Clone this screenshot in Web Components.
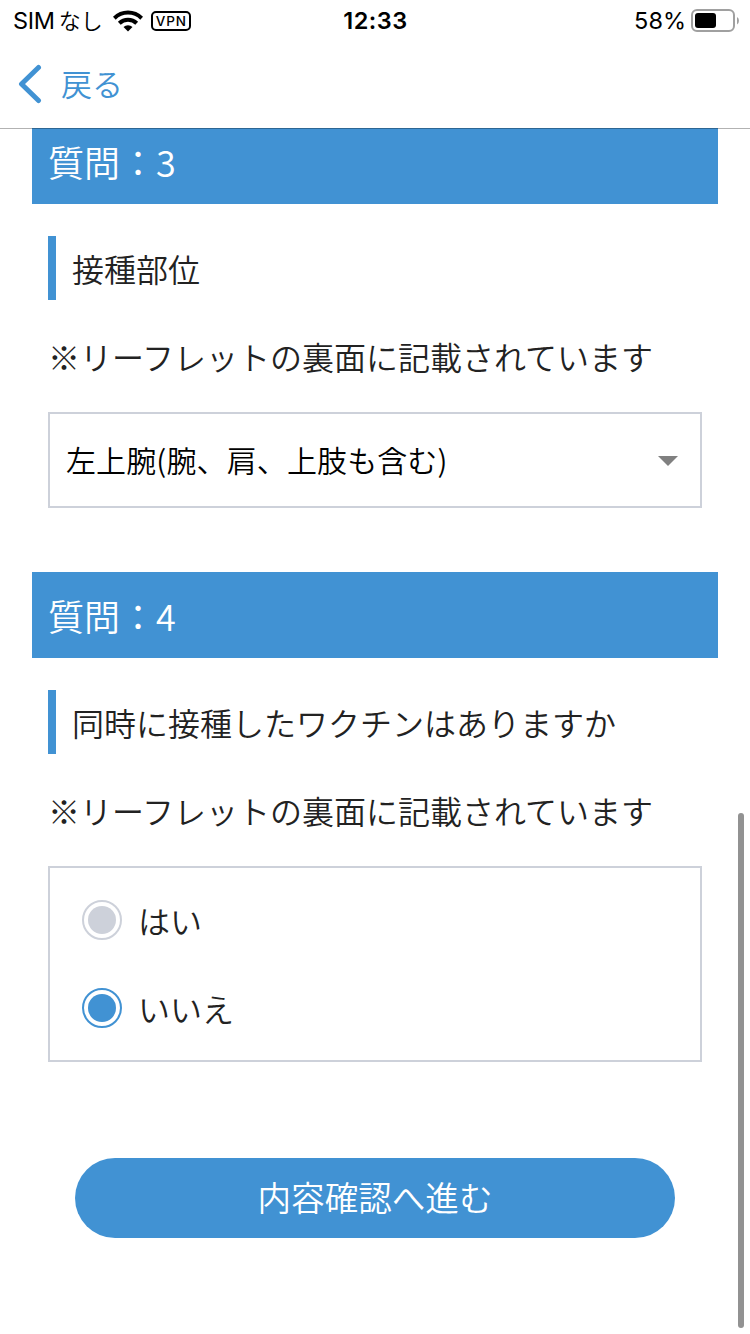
<!DOCTYPE html>
<html lang="ja">
<head>
<meta charset="UTF-8">
<meta name="viewport" content="width=device-width, initial-scale=1">
<title>質問</title>
<style>
    html, body {
        margin: 0;
        height: 100%;
        overflow: hidden;
        background-color: #fff;
    }
    body {
        --blue: #4192d3;
        --gray: #cdd1da;
        font-family: "Noto Sans CJK JP", sans-serif;
        font-weight: 350;
        color: #222;
    }
</style>
</head>
<body>
<app-screen>
    <status-bar slot="top" carrier="SIM" time="12:33" battery="58"></status-bar>
    <nav-bar slot="top">戻る</nav-bar>

    <question-section number="3">
        <span slot="title">接種部位</span>
        <span slot="note">※リーフレットの裏面に記載されています</span>
        <select-box>左上腕(腕、肩、上肢も含む)</select-box>
    </question-section>

    <question-section number="4">
        <span slot="title">同時に接種したワクチンはありますか</span>
        <span slot="note">※リーフレットの裏面に記載されています</span>
        <radio-group>
            <radio-option>はい</radio-option>
            <radio-option checked>いいえ</radio-option>
        </radio-group>
    </question-section>

    <submit-button>内容確認へ進む</submit-button>
</app-screen>

<script>
function attach(element, html) {
    const template = document.createElement('template');
    template.innerHTML = html;
    element.attachShadow({ mode: 'open' });
    element.shadowRoot.appendChild(template.content.cloneNode(true));
}

class AppScreen extends HTMLElement {
    constructor() {
        super();
        attach(this, `
            <style>
                :host {
                    display: flex;
                    flex-direction: column;
                    position: relative;
                    height: 1334px;
                    overflow: hidden;
                }
                .top {
                    position: relative;
                    z-index: 1;
                    background-color: #fff;
                    box-shadow: 0 1px 0 rgba(0, 0, 0, 0.3);
                }
                /* the list is scrolled a little under the top bar */
                .content {
                    display: flex;
                    flex-direction: column;
                    gap: 64px;
                    margin-top: -10px;
                    padding: 0 32px;
                }
                .scrollbar {
                    position: absolute;
                    right: 6px;
                    top: 813px;
                    bottom: 6px;
                    width: 6px;
                    border-radius: 3px;
                    background-color: #929292;
                }
            </style>
            <div class="top"><slot name="top"></slot></div>
            <div class="content"><slot></slot></div>
            <div class="scrollbar"></div>
        `);
    }
}

class StatusBar extends HTMLElement {
    constructor() {
        super();
        attach(this, `
            <style>
                :host {
                    display: grid;
                    grid-template-columns: 1fr auto 1fr;
                    align-items: center;
                    height: 40px;
                    padding: 0 11px 0 13px;
                    font-family: Inter, "Noto Sans CJK JP", sans-serif;
                    font-size: 23.5px;
                    font-weight: 400;
                    line-height: 41px;
                    color: #000;
                }
                .left, .right {
                    display: flex;
                    align-items: center;
                    height: 40px;
                }
                .right {
                    justify-content: flex-end;
                }
                .carrier {
                    letter-spacing: -0.3px;
                }
                .kana {
                    margin-left: 4px;
                    font-family: "Noto Sans CJK JP", sans-serif;
                    font-size: 22px;
                    font-weight: 350;
                    line-height: 36px;
                    padding-bottom: 4px;
                }
                .wifi {
                    margin-left: 10px;
                }
                .vpn {
                    box-sizing: border-box;
                    width: 40px;
                    height: 20px;
                    margin-left: 8px;
                    border: 2px solid #000;
                    border-radius: 5px;
                    font-size: 13.5px;
                    font-weight: 500;
                    line-height: 16px;
                    letter-spacing: 0.8px;
                    text-align: center;
                    text-indent: 1px;
                }
                .time {
                    font-weight: 600;
                    letter-spacing: 0.5px;
                    padding-right: 1px;
                }
                .battery {
                    margin-left: 5px;
                }
                svg {
                    display: block;
                }
            </style>
            <div class="left">
                <span class="carrier"></span><span class="kana">なし</span>
                <svg class="wifi" width="30" height="22" viewBox="0 0 30 22">
                    <g fill="none" stroke="#000" stroke-width="4">
                        <path d="M1.3 8.2a19.6 19.6 0 0 1 27.4 0"/>
                        <path d="M6.3 13.2a12.4 12.4 0 0 1 17.4 0"/>
                    </g>
                    <path d="M15 21.6l-4.5-4.5a6.4 6.4 0 0 1 9 0z"/>
                </svg>
                <span class="vpn">VPN</span>
            </div>
            <span class="time"></span>
            <div class="right">
                <span class="percent"></span>
                <svg class="battery" width="48" height="24" viewBox="0 0 48 24">
                    <rect x="1" y="1" width="42" height="21" rx="5" fill="none" stroke="#a0a0a0" stroke-width="2"/>
                    <rect x="4" y="4" width="21" height="15" rx="3"/>
                    <path d="M46 8q2 1.2 2 3.7T46 15.4z" fill="#a0a0a0"/>
                </svg>
            </div>
        `);
    }

    connectedCallback() {
        this.shadowRoot.querySelector('.carrier').textContent = this.getAttribute('carrier');
        this.shadowRoot.querySelector('.time').textContent = this.getAttribute('time');
        this.shadowRoot.querySelector('.percent').textContent = this.getAttribute('battery') + '%';
    }
}

class NavBar extends HTMLElement {
    constructor() {
        super();
        attach(this, `
            <style>
                :host {
                    display: flex;
                    align-items: center;
                    gap: 19px;
                    height: 88px;
                    padding-left: 18px;
                    font-size: 31px;
                    color: var(--blue);
                }
                span {
                    line-height: 84px;
                    padding-bottom: 3px;
                }
                svg {
                    display: block;
                }
            </style>
            <svg width="24" height="40" viewBox="0 0 24 40">
                <path d="M20.5 3.5L3.5 20l17 16.5" fill="none" stroke="currentColor" stroke-width="5" stroke-linecap="round" stroke-linejoin="round"/>
            </svg>
            <span><slot></slot></span>
        `);
    }
}

class QuestionSection extends HTMLElement {
    constructor() {
        super();
        attach(this, `
            <style>
                :host {
                    display: block;
                }
                .heading {
                    padding: 16px;
                    background-color: var(--blue);
                    color: #fff;
                    font-size: 36px;
                    line-height: 54px;
                }
                .body {
                    display: flex;
                    flex-direction: column;
                    gap: 32px;
                    padding: 32px 16px 0;
                    font-size: 32px;
                }
                .title {
                    padding-left: 16px;
                    border-left: 8px solid var(--blue);
                    line-height: 64px;
                }
                .note {
                    line-height: 48px;
                    white-space: nowrap;
                }
            </style>
            <div class="heading">質問：<span class="number"></span></div>
            <div class="body">
                <div class="title"><slot name="title"></slot></div>
                <div class="note"><slot name="note"></slot></div>
                <slot></slot>
            </div>
        `);
    }

    connectedCallback() {
        this.shadowRoot.querySelector('.number').textContent = this.getAttribute('number');
    }
}

class SelectBox extends HTMLElement {
    constructor() {
        super();
        attach(this, `
            <style>
                :host {
                    display: flex;
                    align-items: center;
                    justify-content: space-between;
                    box-sizing: border-box;
                    height: 96px;
                    padding: 0 22px 0 16px;
                    border: 2px solid var(--gray);
                    font-size: 30px;
                    letter-spacing: 0.12px;
                    color: #000;
                }
                span {
                    padding-bottom: 2px;
                }
                svg {
                    margin-top: 2px;
                }
            </style>
            <span><slot></slot></span>
            <svg width="20" height="10" viewBox="0 0 20 10">
                <path d="M0 0h20L10 10z" fill="#808080"/>
            </svg>
        `);
    }
}

class RadioGroup extends HTMLElement {
    constructor() {
        super();
        attach(this, `
            <style>
                :host {
                    display: flex;
                    flex-direction: column;
                    gap: 48px;
                    padding: 32px;
                    border: 2px solid var(--gray);
                }
            </style>
            <slot></slot>
        `);
    }
}

class RadioOption extends HTMLElement {
    constructor() {
        super();
        attach(this, `
            <style>
                :host {
                    display: flex;
                    align-items: center;
                    gap: 16px;
                    height: 40px;
                    line-height: 40px;
                    --ring: var(--gray);
                }
                :host([checked]) {
                    --ring: var(--blue);
                }
                .circle {
                    box-sizing: border-box;
                    width: 40px;
                    height: 40px;
                    padding: 4px;
                    border: 2px solid var(--ring);
                    border-radius: 50%;
                }
                .dot {
                    height: 28px;
                    border-radius: 50%;
                    background-color: var(--ring);
                }
            </style>
            <div class="circle"><div class="dot"></div></div>
            <span><slot></slot></span>
        `);
    }
}

class SubmitButton extends HTMLElement {
    constructor() {
        super();
        attach(this, `
            <style>
                :host {
                    display: block;
                    align-self: center;
                    width: 600px;
                    height: 80px;
                    margin-top: 32px;
                    border-radius: 40px;
                    background-color: var(--blue);
                    color: #fff;
                    font-size: 33.6px;
                    line-height: 78px;
                    text-align: center;
                }
            </style>
            <slot></slot>
        `);
    }
}

customElements.define('app-screen', AppScreen);
customElements.define('status-bar', StatusBar);
customElements.define('nav-bar', NavBar);
customElements.define('question-section', QuestionSection);
customElements.define('select-box', SelectBox);
customElements.define('radio-group', RadioGroup);
customElements.define('radio-option', RadioOption);
customElements.define('submit-button', SubmitButton);
</script>
</body>
</html>
